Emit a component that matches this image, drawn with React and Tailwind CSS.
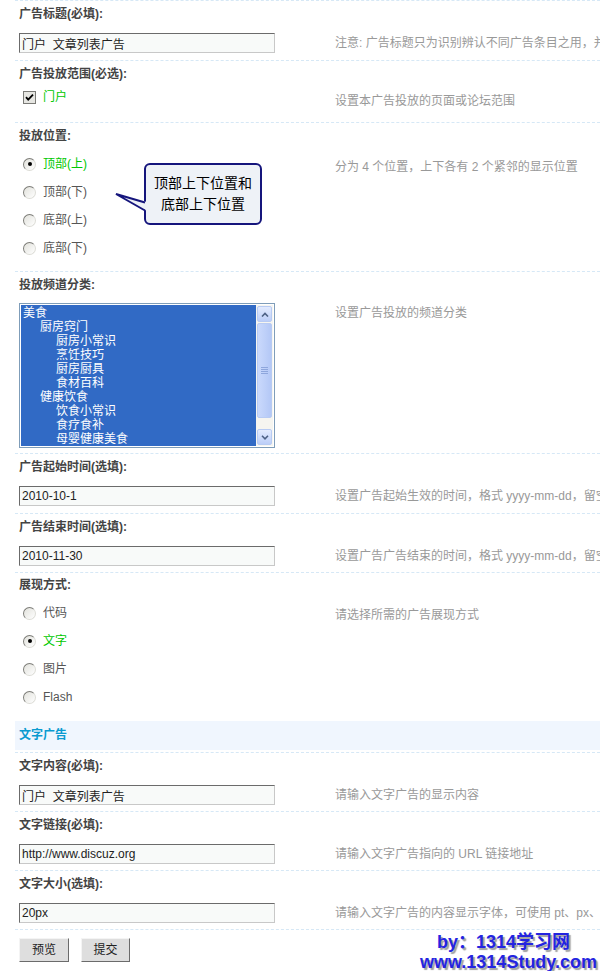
import React from "react";

const sectionCls = "border-b border-dashed border-[#d6e8f6]";

function Label({ children, h = "h-[27px]", pt = "pt-[6px]" }) {
  return (
    <div className={`${h} ${pt} pl-[4px] text-[12px] leading-[14px] font-bold text-[#444] whitespace-nowrap`}>
      {children}
    </div>
  );
}

function TextBox({ value }) {
  return (
    <input
      readOnly
      value={value}
      className="block w-[256px] h-[20px] border border-t-[#6b6b6b] border-l-[#6b6b6b] border-r-[#c8c8c8] border-b-[#c8c8c8] bg-[#f8faf9] pl-[2px] text-[12px] leading-[18px] text-[#222] outline-none font-['Liberation_Sans','Noto_Sans_CJK_SC',sans-serif]"
    />
  );
}

function Hint({ children, cls = "" }) {
  return (
    <div className={`whitespace-nowrap text-[12px] leading-[14px] text-[#999] ${cls}`}>{children}</div>
  );
}

function InputSection({ label, value, hint, pb = "pb-[7px]" }) {
  return (
    <div className={sectionCls}>
      <Label>{label}</Label>
      <div className={`flex items-center pt-[5px] ${pb}`}>
        <div className="w-[320px] shrink-0 pl-[4px]">
          <TextBox value={value} />
        </div>
        <Hint>{hint}</Hint>
      </div>
    </div>
  );
}

function Radio({ checked }) {
  return (
    <span className="relative inline-block w-[13px] h-[13px] shrink-0 rounded-full border border-t-[#7d7d78] border-l-[#7d7d78] border-r-[#dcdcd6] border-b-[#dcdcd6] bg-linear-to-br from-[#e2e2dc] to-[#ffffff]">
      {checked && (
        <span className="absolute left-[3.5px] top-[3.5px] w-[4px] h-[4px] rounded-full bg-black" />
      )}
    </span>
  );
}

function RadioLine({ text, checked }) {
  return (
    <div className="h-[28px] flex items-center pl-[8px]">
      <Radio checked={checked} />
      <span className={`ml-[7px] text-[12px] leading-[14px] ${checked ? "text-[#00c800]" : "text-[#555]"}`}>
        {text}
      </span>
    </div>
  );
}

function Checkbox() {
  return (
    <svg width="13" height="13" viewBox="0 0 13 13" className="shrink-0">
      <rect x="0.5" y="0.5" width="12" height="12" fill="#e6e6e2" stroke="#7a7a76" />
      <path d="M3 6.2 L5.2 8.6 L10 3.6" fill="none" stroke="#000" strokeWidth="1.8" />
    </svg>
  );
}

function ScrollBtn({ dir }) {
  return (
    <div className="h-[16px] mx-[1px] rounded-[2px] border border-[#b8cbf3] bg-linear-to-b from-[#e3ebfe] to-[#bccef8] flex items-center justify-center">
      <svg width="8" height="5" viewBox="0 0 8 5">
        {dir === "up" ? (
          <path d="M1 4.5 L4 1.5 L7 4.5" fill="none" stroke="#4d6185" strokeWidth="1.6" />
        ) : (
          <path d="M1 0.8 L4 3.8 L7 0.8" fill="none" stroke="#4d6185" strokeWidth="1.6" />
        )}
      </svg>
    </div>
  );
}

function ListBox() {
  const items = [
    ["美食", 0],
    ["厨房窍门", 1],
    ["厨房小常识", 2],
    ["烹饪技巧", 2],
    ["厨房厨具", 2],
    ["食材百科", 2],
    ["健康饮食", 1],
    ["饮食小常识", 2],
    ["食疗食补", 2],
    ["母婴健康美食", 2],
  ];
  const pad = ["pl-[2px]", "pl-[19px]", "pl-[35px]"];
  return (
    <div className="w-[256px] h-[145px] border border-[#7f9db9] p-[1px] bg-white flex">
      <div className="flex-1 bg-[#316ac5] pt-[1px] overflow-hidden">
        {items.map(([t, l], i) => (
          <div key={i} className={`${pad[l]} text-[12px] leading-[14px] text-white whitespace-nowrap`}>
            {t}
          </div>
        ))}
      </div>
      <div className="w-[17px] bg-[#f6f5f0] flex flex-col py-[1px]">
        <ScrollBtn dir="up" />
        <div className="mt-[1px] h-[95px] mx-[1px] rounded-[2px] border border-[#b8cbf3] bg-linear-to-r from-[#cad9fc] to-[#b4c8f6] flex flex-col items-center justify-center gap-[1px]">
          <div className="w-[7px] h-[1px] bg-[#8ea6dc]" />
          <div className="w-[7px] h-[1px] bg-[#8ea6dc]" />
          <div className="w-[7px] h-[1px] bg-[#8ea6dc]" />
          <div className="w-[7px] h-[1px] bg-[#8ea6dc]" />
        </div>
        <div className="flex-1" />
        <ScrollBtn dir="down" />
      </div>
    </div>
  );
}

export default function App() {
  return (
    <div className="relative w-[600px] h-[971px] overflow-hidden bg-white font-['Liberation_Sans','Noto_Sans_CJK_SC',sans-serif]">
      <div className="pl-[15px]">
        <div className="border-t border-dashed border-[#d6e8f6]" />

        {/* S1 */}
        <InputSection
          label="广告标题(必填):"
          value="门户  文章列表广告"
          hint="注意: 广告标题只为识别辨认不同广告条目之用，并不会在广告中显示"
        />

        {/* S2 */}
        <div className={sectionCls}>
          <Label>广告投放范围(必选):</Label>
          <div className="flex items-start h-[34px]">
            <div className="w-[320px] shrink-0 pl-[8px] pt-[3px] flex items-center">
              <Checkbox />
              <span className="ml-[7px] text-[12px] leading-[13px] text-[#00c800]">门户</span>
            </div>
            <Hint cls="pt-[6px]">设置本广告投放的页面或论坛范围</Hint>
          </div>
        </div>

        {/* S3 */}
        <div className={sectionCls}>
          <Label h="h-[27px]">投放位置:</Label>
          <div className="flex items-start pb-[9px]">
            <div className="w-[320px] shrink-0">
              <RadioLine text="顶部(上)" checked />
              <RadioLine text="顶部(下)" />
              <RadioLine text="底部(上)" />
              <RadioLine text="底部(下)" />
            </div>
            <Hint cls="pt-[10px]">分为 4 个位置，上下各有 2 个紧邻的显示位置</Hint>
          </div>
        </div>

        {/* S4 */}
        <div className={sectionCls}>
          <Label>投放频道分类:</Label>
          <div className="flex items-start pt-[4px] pb-[5px]">
            <div className="w-[320px] shrink-0 pl-[4px]">
              <ListBox />
            </div>
            <Hint cls="pt-[3px]">设置广告投放的频道分类</Hint>
          </div>
        </div>

        {/* S5 */}
        <InputSection
          label="广告起始时间(选填):"
          value="2010-10-1"
          hint="设置广告起始生效的时间，格式 yyyy-mm-dd，留空为不限制起始时间"
        />

        {/* S6 */}
        <InputSection
          label="广告结束时间(选填):"
          value="2010-11-30"
          pb="pb-[6px]"
          hint="设置广告广告结束的时间，格式 yyyy-mm-dd，留空为不限制结束时间"
        />

        {/* S7 */}
        <div>
          <Label h="h-[26px]" pt="pt-[5px]">展现方式:</Label>
          <div className="flex items-start pb-[10px]">
            <div className="w-[320px] shrink-0">
              <RadioLine text="代码" />
              <RadioLine text="文字" checked />
              <RadioLine text="图片" />
              <RadioLine text="Flash" />
            </div>
            <Hint cls="pt-[9px]">请选择所需的广告展现方式</Hint>
          </div>
        </div>

        {/* header */}
        <div className={`${sectionCls} pb-[2px]`}>
          <div className="h-[29px] bg-[#f0f6fe] pl-[4px] text-[12px] leading-[29px] font-bold text-[#0a9bd0]">
            文字广告
          </div>
        </div>

        <InputSection
          label="文字内容(必填):"
          value="门户  文章列表广告"
          pb="pb-[6px]"
          hint="请输入文字广告的显示内容"
        />
        <InputSection
          label="文字链接(必填):"
          value="http://www.discuz.org"
          pb="pb-[6px]"
          hint="请输入文字广告指向的 URL 链接地址"
        />
        <InputSection
          label="文字大小(选填):"
          value="20px"
          pb="pb-[6px]"
          hint="请输入文字广告的内容显示字体，可使用 pt、px、em 为单位"
        />

        <div className="flex gap-[12px] pl-[4px] pt-[8px]">
          <button className="w-[50px] h-[24px] bg-[#dedede] border border-t-[#f4f4f4] border-l-[#f4f4f4] border-r-[#6b6b6b] border-b-[#6b6b6b] text-[12px] text-[#222]">
            预览
          </button>
          <button className="w-[49px] h-[24px] bg-[#dedede] border border-t-[#f4f4f4] border-l-[#f4f4f4] border-r-[#6b6b6b] border-b-[#6b6b6b] text-[12px] text-[#222]">
            提交
          </button>
        </div>
      </div>

      {/* callout tooltip */}
      <div className="absolute left-[144px] top-[163px] w-[118px] h-[62px] rounded-[6px] border-2 border-[#15157c] bg-[#eef2f7] flex flex-col items-center justify-center text-[14px] leading-[21px] text-black">
        <div>顶部上下位置和</div>
        <div>底部上下位置</div>
      </div>
      <svg className="absolute left-[114px] top-[190px]" width="34" height="24" viewBox="0 0 34 24">
        <polygon points="2,4 33,12 33,21" fill="#eef2f7" />
        <path d="M31,12.5 L2,4 L31,20.5" fill="none" stroke="#15157c" strokeWidth="2" strokeLinejoin="miter" />
      </svg>

      {/* watermark */}
      <div className="absolute left-[420px] top-[932px] text-[18px] leading-[20px] font-bold text-[#2424e0] [text-shadow:2px_2px_1px_#a0a0a0] whitespace-nowrap">
        <div className="pl-[17px]">by：1314学习网</div>
        <div>www.1314Study.com</div>
      </div>
    </div>
  );
}
